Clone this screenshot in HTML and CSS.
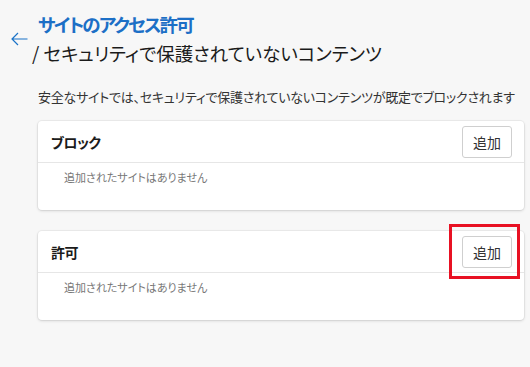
FILE: index.html
```html
<!DOCTYPE html>
<html lang="ja">
<head>
    <meta charset="UTF-8">
    <meta name="viewport" content="width=device-width, initial-scale=1.0">
    <title>サイトのアクセス許可</title>
    <link rel="stylesheet" href="styles.css">
</head>
<body>
    <div class="page">
        <div class="header">
            <button class="back" aria-label="戻る">
                <svg width="17" height="14" viewBox="0 0 17 14">
                    <path d="M16.5 7H1M7 1L1 7l6 6" fill="none" stroke="#1a73c8" stroke-width="1.2"/>
                </svg>
            </button>
            <div class="titles">
                <div class="crumb">サイトのアクセス許可</div>
                <h1>/ セキュリティで保護されていないコンテンツ</h1>
            </div>
        </div>

        <p class="desc">安全なサイトでは、セキュリティで保護されていないコンテンツが既定でブロックされます</p>

        <div class="card">
            <div class="card-head">
                <h2>ブロック</h2>
                <button class="add">追加</button>
            </div>
            <div class="card-body">追加されたサイトはありません</div>
        </div>

        <div class="card">
            <div class="card-head">
                <h2>許可</h2>
                <button class="add marked">追加</button>
            </div>
            <div class="card-body">追加されたサイトはありません</div>
        </div>
    </div>
</body>
</html>
```

FILE: styles.css
```css
body {
    margin: 0;
    background: #f7f7f7;
    font-family: "Noto Sans CJK JP", "Noto Sans", sans-serif;
    font-feature-settings: "palt";
    color: #1b1b1b;
}
.page {
    padding: 10px 6px 0 38px;
}
.header {
    display: flex;
    align-items: center;
    margin-left: -32px;
}
.back {
    background: none;
    border: none;
    padding: 0;
    width: 26px;
    display: flex;
    justify-content: center;
    cursor: pointer;
}
.titles {
    font-size: 18.5px;
    line-height: 29px;
}
.crumb {
    color: #1c6fc6;
    padding-left: 6px;
    font-weight: 600;
    letter-spacing: -1.8px;
}
h1 {
    margin: 0;
    font-size: 18.5px;
    font-weight: 400;
}
.desc {
    margin: 19px 0 14px;
    font-size: 13px;
    line-height: 20px;
    color: #333;
    letter-spacing: -0.25px;
    white-space: nowrap;
}
.card {
    background: #fff;
    border-radius: 4px;
    box-shadow: 0 0 0 1px rgba(0, 0, 0, 0.04), 0 1px 3px rgba(0, 0, 0, 0.14);
    margin-bottom: 21px;
}
.card-head {
    display: flex;
    align-items: center;
    justify-content: space-between;
    padding: 5px 12px 4px 13px;
    border-bottom: 1px solid #e6e6e6;
}
h2 {
    margin: 0;
    font-size: 14px;
    font-weight: 700;
    letter-spacing: -0.5px;
}
.add {
    position: relative;
    width: 50px;
    height: 32px;
    background: #fff;
    border: 1px solid #cfcfcf;
    border-radius: 3px;
    font-family: inherit;
    font-size: 14px;
    color: #333;
    cursor: pointer;
}
.marked::after {
    content: "";
    position: absolute;
    left: -14px;
    right: -9px;
    top: -13px;
    bottom: -12px;
    border: 3px solid #e81123;
}
.card-body {
    padding: 5px 0 24px 26px;
    font-size: 11px;
    line-height: 18px;
    color: #777;
}
```
